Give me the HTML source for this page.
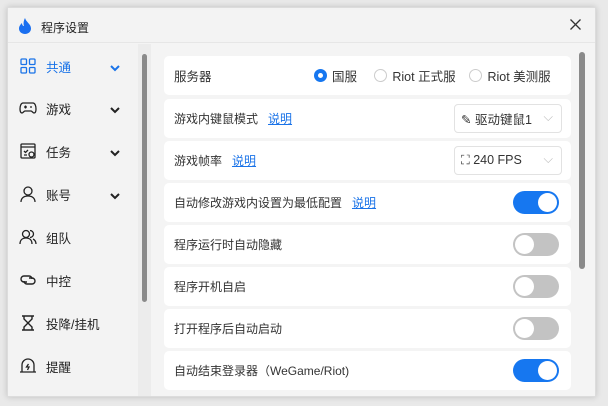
<!DOCTYPE html>
<html><head><meta charset="utf-8"><style>
*{margin:0;padding:0;box-sizing:border-box}
body{width:608px;height:406px;background:#e9e9e9;font-family:"Liberation Sans","Noto Sans CJK SC",sans-serif;position:relative;overflow:hidden}
.win{position:absolute;left:7px;top:7px;width:589px;height:390px;background:#f4f4f4;box-shadow:0 0 6px rgba(0,0,0,.18);border:1px solid #dcdcdc}
.title{position:absolute;left:0;top:0;width:100%;height:35px;background:#f3f3f3;border-bottom:1px solid #e6e6e6}
.title span{position:absolute;left:33px;top:11px;font-size:12px;color:#222}
.close{position:absolute;right:14px;top:11px}
.side{position:absolute;left:0;top:36px;width:130px;height:352px;background:#f3f3f3}
.sb{position:absolute;left:130px;top:36px;width:13px;height:352px;background:#ececec}
.sb i{position:absolute;left:4px;top:10px;width:5px;height:248px;border-radius:3px;background:#8a8a8a}
.item{position:absolute;left:11px;height:20px;font-size:12.5px;color:#222;display:flex;align-items:center}
.item svg{width:18px;height:18px;margin-right:9px}
.item .ch{position:absolute;left:90px;top:3px;width:12px}
.row{position:absolute;left:156px;width:407px;background:#fff;border-radius:5px;font-size:12px;color:#333}
.row .t{position:absolute;left:10px;top:0;height:100%;display:flex;align-items:center}
.lk{color:#1a73e8;text-decoration:underline;margin-left:10px}
.tg{position:absolute;left:349px;top:8px;width:46px;height:23px;border-radius:12px;background:#c3c3c3}
.tg:after{content:"";position:absolute;left:2px;top:2px;width:19px;height:19px;border-radius:50%;background:#fff}
.tg.on{background:#1677f0}.tg.on:after{left:25px}
.sel{position:absolute;left:290px;top:5px;width:108px;height:29px;border:1px solid #e2e2e2;border-radius:4px;font-size:12.5px;color:#333}
.sel .v{position:absolute;left:6px;top:0;height:100%;display:flex;align-items:center}
.rsb{position:absolute;left:571px;top:44px;width:6px;height:217px;border-radius:3px;background:#8a8a8a}
.rad{display:inline-block;width:13px;height:13px;border-radius:50%;border:1px solid #ccc;vertical-align:-2px;margin-right:5px}
</style></head><body>
<div class="win">
<div class="title">
<svg style="position:absolute;left:10px;top:10px" width="14" height="16" viewBox="0 0 14 16"><path d="M7 0C8 4 13 6 13 10.5 13 14 10 16 7 16 4 16 1 14 1 10.5 1 8 3 6 4 5 4 7 5 8 6 8 5 5 6 2 7 0Z" fill="#1a6ff0"/></svg>
<span>程序设置</span><svg class="close" width="11" height="11" viewBox="0 0 11 11"><path d="M0.5 0.5l10 10M10.5 0.5l-10 10" stroke="#333" stroke-width="1.3"/></svg></div>
<div class="side">
<div class="item" style="top:12px;color:#1a73e8"><svg viewBox="0 0 18 18" fill="none" stroke="#1a73e8" stroke-width="1.3"><rect x="2" y="2" width="5.5" height="5.5" rx="1"/><rect x="10.5" y="2" width="5.5" height="5.5" rx="1"/><rect x="2" y="10.5" width="5.5" height="5.5" rx="1"/><rect x="10.5" y="10.5" width="5.5" height="5.5" rx="1"/></svg>共通<svg class="ch" viewBox="0 0 12 12"><path d="M2 4l4 4 4-4" stroke="#1a73e8" stroke-width="2" fill="none"/></svg></div>
<div class="item" style="top:54px"><svg viewBox="0 0 18 18" fill="none" stroke="#222" stroke-width="1.3"><path d="M4 4h10c2 0 3 3 3 6s-1 4-2 4-2-2-3-2H6c-1 0-2 2-3 2s-2-1-2-4 1-6 3-6z"/><path d="M5 8h3M6.5 6.5v3M11 8h2"/></svg>游戏<svg class="ch" viewBox="0 0 12 12"><path d="M2 4l4 4 4-4" stroke="#222" stroke-width="2" fill="none"/></svg></div>
<div class="item" style="top:97px"><svg viewBox="0 0 18 18" fill="none" stroke="#222" stroke-width="1.3"><rect x="2" y="2" width="14" height="14" rx="1"/><path d="M2 5h14M5 9l1.5 1.5L9 8M5 13h3"/><circle cx="12.5" cy="12.5" r="2.5"/></svg>任务<svg class="ch" viewBox="0 0 12 12"><path d="M2 4l4 4 4-4" stroke="#222" stroke-width="2" fill="none"/></svg></div>
<div class="item" style="top:140px"><svg viewBox="0 0 18 18" fill="none" stroke="#222" stroke-width="1.3"><circle cx="9" cy="6" r="4"/><path d="M2 17c0-4 3-6 7-6s7 2 7 6"/></svg>账号<svg class="ch" viewBox="0 0 12 12"><path d="M2 4l4 4 4-4" stroke="#222" stroke-width="2" fill="none"/></svg></div>
<div class="item" style="top:183px"><svg viewBox="0 0 18 18" fill="none" stroke="#222" stroke-width="1.3"><circle cx="7" cy="6" r="3.5"/><path d="M1 16c0-4 2.5-6 6-6s6 2 6 6M11 2.5a3.5 3.5 0 0 1 0 7M14 11c2 1 3 3 3 5"/></svg>组队</div>
<div class="item" style="top:226px"><svg viewBox="0 0 18 18" fill="none" stroke="#222" stroke-width="1.4"><path d="M8 11H5a3 3 0 0 1 0-6h5a3 3 0 0 1 3 3"/><path d="M10 7h3a3 3 0 0 1 0 6H8a3 3 0 0 1-3-3"/></svg>中控</div>
<div class="item" style="top:269px"><svg viewBox="0 0 18 18" fill="none" stroke="#222" stroke-width="1.4"><path d="M3 2h12M3 16h12M5 2v3l4 4-4 4v3M13 2v3l-4 4 4 4v3"/></svg>投降/挂机</div>
<div class="item" style="top:312px"><svg viewBox="0 0 18 18" fill="none" stroke="#222" stroke-width="1.3"><path d="M3 15V8a6 6 0 0 1 12 0v7zM1 15h16"/><path d="M9.5 7l-2 3h2.5l-1.5 3" /></svg>提醒</div>
</div>
<div class="sb"><i></i></div>
<div class="row" style="top:48px;height:39px"><span class="t" style="font-size:12.5px">服务器</span>
<div style="position:absolute;left:150px;top:0;height:100%;display:flex;align-items:center;font-size:12.5px;white-space:nowrap"><span class="rad" style="border:4px solid #1677f0"></span>国服&nbsp;&nbsp;&nbsp;&nbsp;&nbsp;<span class="rad"></span>Riot 正式服&nbsp;&nbsp;&nbsp;&nbsp;<span class="rad"></span>Riot 美测服</div></div>
<div class="row" style="top:91px;height:39px"><span class="t">游戏内键鼠模式<span class="lk">说明</span></span><div class="sel"><span class="v">✎ 驱动键鼠1</span><span style="position:absolute;right:8px;top:5px;color:#bbb">⌵</span></div></div>
<div class="row" style="top:133px;height:39px"><span class="t">游戏帧率<span class="lk">说明</span></span><div class="sel"><span class="v">⛶ 240 FPS</span><span style="position:absolute;right:8px;top:5px;color:#bbb">⌵</span></div></div>
<div class="row" style="top:175px;height:39px"><span class="t">自动修改游戏内设置为最低配置<span class="lk">说明</span></span><div class="tg on"></div></div>
<div class="row" style="top:217px;height:39px"><span class="t">程序运行时自动隐藏</span><div class="tg"></div></div>
<div class="row" style="top:259px;height:39px"><span class="t">程序开机自启</span><div class="tg"></div></div>
<div class="row" style="top:301px;height:39px"><span class="t">打开程序后自动启动</span><div class="tg"></div></div>
<div class="row" style="top:343px;height:39px"><span class="t">自动结束登录器（WeGame/Riot)</span><div class="tg on"></div></div>
<div class="rsb"></div>
</div>
</body></html>
